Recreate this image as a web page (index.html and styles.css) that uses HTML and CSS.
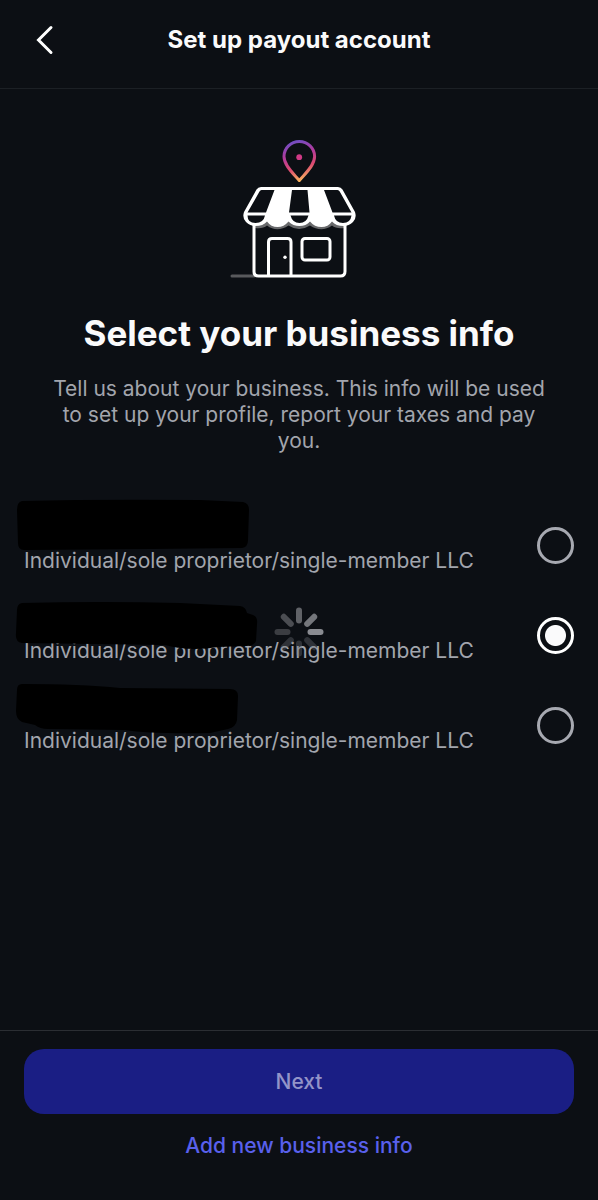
FILE: index.html
```html
<!DOCTYPE html>
<html lang="en">
<head>
<meta charset="utf-8">
<meta name="viewport" content="width=device-width, initial-scale=1">
<title>Set up payout account</title>
<link rel="stylesheet" href="styles.css">
</head>
<body>
<header class="topbar">
  <button class="back" type="button" aria-label="Back">
    <svg width="18" height="30" viewBox="0 0 18 30" fill="none" stroke="#fff" stroke-width="3" stroke-linecap="round" stroke-linejoin="miter"><path d="M15 2.500 2.500 15 15 27.500"/></svg>
  </button>
  <h1 class="topbar-title">Set up payout account</h1>
</header>
<main class="content">
  <svg class="shop" width="150" height="145" viewBox="4 8 150 145" fill="none" aria-hidden="true">
    <defs>
      <linearGradient id="pin" x1="72" y1="10" x2="84" y2="52" gradientUnits="userSpaceOnUse">
        <stop offset="0" stop-color="#6a50c8"/><stop offset=".35" stop-color="#b23a9c"/><stop offset=".65" stop-color="#dc4a70"/><stop offset="1" stop-color="#ffc45c"/>
      </linearGradient>
    </defs>
    <path d="M79.300 50.500C75 45 64 36 64 26.500a15.300 15 0 0 1 30.600 0C94.600 36 83.600 45 79.300 50.500Z" stroke="url(#pin)" stroke-width="3" stroke-linejoin="round"/>
    <circle cx="79.200" cy="27.200" r="2.900" fill="#d03a86"/>
    <path d="M12 146H34" stroke="#58595c" stroke-width="3" stroke-linecap="round"/>
    <path d="M35 90V98Q43 99 47 95.500 57 103 68.500 95.500 79 102.500 90 95.500 101.500 103 112 95.500 116 99 124 98V90Z" fill="#68696b"/>
    <path d="M34 94V141.500q0 4.500 4.500 4.500H120.500q4.500 0 4.500-4.500V94" stroke="#fff" stroke-width="3"/>
    <path d="M48.500 145V112q0-3.500 3.500-3.500H67.500q3.500 0 3.500 3.500V145" stroke="#fff" stroke-width="3"/>
    <circle cx="65" cy="127.300" r="1.700" fill="#fff"/>
    <rect x="82" y="108.500" width="28" height="21.500" rx="3" stroke="#fff" stroke-width="3"/>
    <path d="M41 57H118Q121 57 122.500 59.500L135 82Q137 88 133 92 129 96 123.500 96 116 96 112 91.500 108 97 101.500 97 94.500 97 90 91.500 86 96 79.500 96 73 96 68.500 91.500 64 97 57.500 97 51 97 47 91.500 43 96 35.500 96 30 96 26 92 22 88 24 82L36.500 59.500Q38 57 41 57Z" fill="#fff"/>
    <path d="M41.500 60H54.500L46 82.500H27.500L39.500 61.500Q40.300 60 41.500 60ZM72 60H87.500L89.500 82.500H69ZM104 60H117.500Q119 60 119.700 61.500L131.500 82.500H112.500ZM27.500 85.500H45Q43.500 93 35.500 93T27.500 85.500ZM70.500 85.500H88.500Q86.500 93 79.500 93T70.500 85.500ZM114 85.500H131.500Q130.500 93 123 93T114 85.500Z" fill="#0c0f14"/>
  </svg>
  <h2 class="heading">Select your business info</h2>
  <p class="intro">Tell us about your business. This info will be used to set up your profile, report your taxes and pay you.</p>
  <div class="options" role="radiogroup" aria-label="Business info">
    <label class="option">
      <span class="option-type">Individual/sole proprietor/single-member LLC</span>
      <input class="radio" type="radio" name="business">
      <svg class="mask" width="250" height="64" viewBox="0 0 250 64" aria-hidden="true"><path d="M22 1 Q100-1 200 0L243 2Q249 3 249 10L248 40Q248 47 242 48L150 49 24 50Q18 50 18 43L17 10Q17 2 22 1Z"/></svg>
    </label>
    <label class="option">
      <span class="option-type">Individual/sole proprietor/single-member LLC</span>
      <input class="radio" type="radio" name="business" checked>
      <svg class="mask" width="260" height="64" viewBox="0 0 260 64" aria-hidden="true"><path d="M22 13Q100 11 180 13L240 16Q246 17 247 23L253 25Q258 27 257 34L256 51Q254 56 246 56L218 57Q190 62 165 55L22 53Q15 52 16 43L17 20Q17 14 22 13Z"/></svg>
    </label>
    <label class="option">
      <span class="option-type">Individual/sole proprietor/single-member LLC</span>
      <input class="radio" type="radio" name="business">
      <svg class="mask" width="250" height="64" viewBox="0 0 250 64" aria-hidden="true"><path d="M22 4Q80 4 120 8L230 9Q238 9 238 16L237 40Q236 47 228 49L210 53Q150 54 125 50L48 49Q40 49 35 45L22 42Q16 39 16 31L17 10Q17 4 22 4Z"/></svg>
    </label>
    <svg class="spinner" width="50" height="50" viewBox="-25 -25 50 50" stroke-width="6" stroke-linecap="round" role="img" aria-label="Loading">
      <path d="M11.500 0H21.500" stroke="#898b91"/>
      <path d="M8.200-8.200 15.200-15.200" stroke="#74767b"/>
      <path d="M0-11.500V-21.500" stroke="#606267"/>
      <path d="M-8.200-8.200-15.200-15.200" stroke="#4b4d52"/>
      <path d="M-11.500 0H-21.500" stroke="#3b3d42"/>
      <path d="M-8.200 8.200-15.200 15.200M0 11.500V21.500M8.200 8.200 15.200 15.200" stroke="#74767b" stroke-opacity=".35"/>
    </svg>
  </div>
</main>
<footer class="actions">
  <button class="next" type="button" disabled>Next</button>
  <button class="add" type="button">Add new business info</button>
</footer>
</body>
</html>
```
FILE: styles.css
```css
* { box-sizing: border-box; }
body {
  margin: 0;
  min-height: 100vh;
  display: flex;
  flex-direction: column;
  background: #0c0f14;
  color: #fafafb;
  font-family: Inter, "Liberation Sans", sans-serif;
}
h1, h2, p { margin: 0; }
button { padding: 0; border: 0; background: none; font: inherit; }
.topbar {
  display: grid;
  grid-template-columns: 48px 1fr 48px;
  align-items: center;
  padding: 20px 24px 28px;
  border-bottom: 1px solid #1c2025;
}
.back {
  display: flex;
  align-items: center;
  height: 40px;
  padding-left: 12px;
}
.topbar-title {
  font-size: 24px;
  line-height: 40px;
  font-weight: 700;
  text-align: center;
}
.content {
  flex: 1;
  display: flex;
  flex-direction: column;
  align-items: center;
  padding-top: 49px;
}
.shop { display: block; }
.heading {
  margin-top: 28px;
  font-size: 35px;
  line-height: 44px;
  font-weight: 700;
  text-align: center;
}
.intro {
  margin-top: 21px;
  padding: 0 48px;
  font-size: 21px;
  line-height: 26px;
  color: #a2a5ad;
  text-align: center;
}
.options {
  position: relative;
  align-self: stretch;
  margin-top: 46px;
}
.option {
  position: relative;
  display: flex;
  align-items: center;
  justify-content: space-between;
  height: 90px;
  padding: 0 24px;
}
.option-type {
  padding-top: 32px;
  font-size: 21px;
  line-height: 28px;
  color: #a2a5ad;
}
.radio {
  appearance: none;
  width: 37px;
  height: 37px;
  margin: 0;
  border: 3px solid #a7a9b1;
  border-radius: 50%;
}
.radio:checked {
  border-color: #fff;
  background: radial-gradient(circle, #fafafb 10px, transparent 11px);
}
.mask {
  position: absolute;
  top: 0;
  left: 0;
  fill: #000;
  overflow: visible;
}
.spinner {
  position: absolute;
  top: 49%;
  left: 50%;
  transform: translate(-50%, -50%);
}
.actions {
  display: flex;
  flex-direction: column;
  gap: 16px;
  padding: 18px 24px 38px;
  border-top: 1px solid #2b2e33;
}
.next {
  height: 65px;
  border-radius: 20px;
  background: #1a1e84;
  color: #9394c8;
  font-size: 21px;
  font-weight: 500;
}
.add {
  align-self: center;
  color: #5960ec;
  font-size: 21px;
  line-height: 32px;
  font-weight: 500;
}
```
